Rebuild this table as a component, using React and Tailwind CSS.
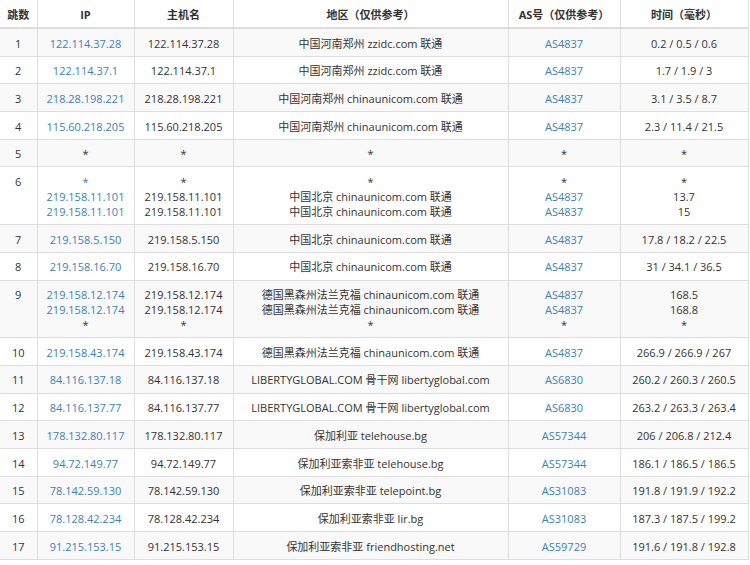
const ROWS = [
  { hop: 1, ip: ['122.114.37.28'], host: ['122.114.37.28'], area: ['中国河南郑州 zzidc.com 联通'], as: ['AS4837'], time: ['0.2 / 0.5 / 0.6'] },
  { hop: 2, ip: ['122.114.37.1'], host: ['122.114.37.1'], area: ['中国河南郑州 zzidc.com 联通'], as: ['AS4837'], time: ['1.7 / 1.9 / 3'] },
  { hop: 3, ip: ['218.28.198.221'], host: ['218.28.198.221'], area: ['中国河南郑州 chinaunicom.com 联通'], as: ['AS4837'], time: ['3.1 / 3.5 / 8.7'] },
  { hop: 4, ip: ['115.60.218.205'], host: ['115.60.218.205'], area: ['中国河南郑州 chinaunicom.com 联通'], as: ['AS4837'], time: ['2.3 / 11.4 / 21.5'] },
  { hop: 5, ip: ['*'], host: ['*'], area: ['*'], as: ['*'], time: ['*'] },
  { hop: 6, ip: ['*', '219.158.11.101', '219.158.11.101'], host: ['*', '219.158.11.101', '219.158.11.101'], area: ['*', '中国北京 chinaunicom.com 联通', '中国北京 chinaunicom.com 联通'], as: ['*', 'AS4837', 'AS4837'], time: ['*', '13.7', '15'] },
  { hop: 7, ip: ['219.158.5.150'], host: ['219.158.5.150'], area: ['中国北京 chinaunicom.com 联通'], as: ['AS4837'], time: ['17.8 / 18.2 / 22.5'] },
  { hop: 8, ip: ['219.158.16.70'], host: ['219.158.16.70'], area: ['中国北京 chinaunicom.com 联通'], as: ['AS4837'], time: ['31 / 34.1 / 36.5'] },
  { hop: 9, ip: ['219.158.12.174', '219.158.12.174', '*'], host: ['219.158.12.174', '219.158.12.174', '*'], area: ['德国黑森州法兰克福 chinaunicom.com 联通', '德国黑森州法兰克福 chinaunicom.com 联通', '*'], as: ['AS4837', 'AS4837', '*'], time: ['168.5', '168.8', '*'] },
  { hop: 10, ip: ['219.158.43.174'], host: ['219.158.43.174'], area: ['德国黑森州法兰克福 chinaunicom.com 联通'], as: ['AS4837'], time: ['266.9 / 266.9 / 267'] },
  { hop: 11, ip: ['84.116.137.18'], host: ['84.116.137.18'], area: ['LIBERTYGLOBAL.COM 骨干网 libertyglobal.com'], as: ['AS6830'], time: ['260.2 / 260.3 / 260.5'] },
  { hop: 12, ip: ['84.116.137.77'], host: ['84.116.137.77'], area: ['LIBERTYGLOBAL.COM 骨干网 libertyglobal.com'], as: ['AS6830'], time: ['263.2 / 263.3 / 263.4'] },
  { hop: 13, ip: ['178.132.80.117'], host: ['178.132.80.117'], area: ['保加利亚 telehouse.bg'], as: ['AS57344'], time: ['206 / 206.8 / 212.4'] },
  { hop: 14, ip: ['94.72.149.77'], host: ['94.72.149.77'], area: ['保加利亚索非亚 telehouse.bg'], as: ['AS57344'], time: ['186.1 / 186.5 / 186.5'] },
  { hop: 15, ip: ['78.142.59.130'], host: ['78.142.59.130'], area: ['保加利亚索非亚 telepoint.bg'], as: ['AS31083'], time: ['191.8 / 191.9 / 192.2'] },
  { hop: 16, ip: ['78.128.42.234'], host: ['78.128.42.234'], area: ['保加利亚索非亚 lir.bg'], as: ['AS31083'], time: ['187.3 / 187.5 / 199.2'] },
  { hop: 17, ip: ['91.215.153.15'], host: ['91.215.153.15'], area: ['保加利亚索非亚 friendhosting.net'], as: ['AS59729'], time: ['191.6 / 191.8 / 192.8'] },
]

const td = 'border-t border-l border-[#dddddd] px-1 pt-[6.6px] pb-[5.1px] align-top first:border-l-0'

function Lines({ items, link, starLink }) {
  return items.map((t, i) => {
    const blue = t === '*' ? starLink : link
    return (
      <div key={i} className={blue ? 'text-[#3a7fc2]' : ''}>{t}</div>
    )
  })
}

export default function App() {
  return (
    <div className="bg-white w-[750px] h-[565px] overflow-hidden">
      <table
        className="w-[748px] table-fixed border-collapse border-r border-b border-[#dddddd] text-center text-[11px] leading-[15px] text-[#333333]"
        style={{ fontFamily: '"Open Sans", "Noto Sans CJK SC", sans-serif' }}
      >
        <colgroup>
          <col className="w-[37px]" />
          <col className="w-[97px]" />
          <col className="w-[99px]" />
          <col className="w-[275px]" />
          <col className="w-[112px]" />
          <col className="w-[128px]" />
        </colgroup>
        <thead>
          <tr className="border-b-2 border-[#dddddd]">
            {['跳数', 'IP', '主机名', '地区（仅供参考）', 'AS号（仅供参考）', '时间（毫秒）'].map((h) => (
              <th key={h} className="border-l border-[#dddddd] first:border-l-0 px-1 pt-[7px] pb-[5px] font-bold">{h}</th>
            ))}
          </tr>
        </thead>
        <tbody>
          {ROWS.map((r) => (
            <tr key={r.hop} className={r.hop % 2 ? 'bg-[#f9f9f9]' : 'bg-white'}>
              <td className={td}>{r.hop}</td>
              <td className={td}><Lines items={r.ip} link starLink={r.hop === 6} /></td>
              <td className={td}><Lines items={r.host} /></td>
              <td className={td}><Lines items={r.area} /></td>
              <td className={td}><Lines items={r.as} link /></td>
              <td className={td}><Lines items={r.time} /></td>
            </tr>
          ))}
        </tbody>
      </table>
    </div>
  )
}
